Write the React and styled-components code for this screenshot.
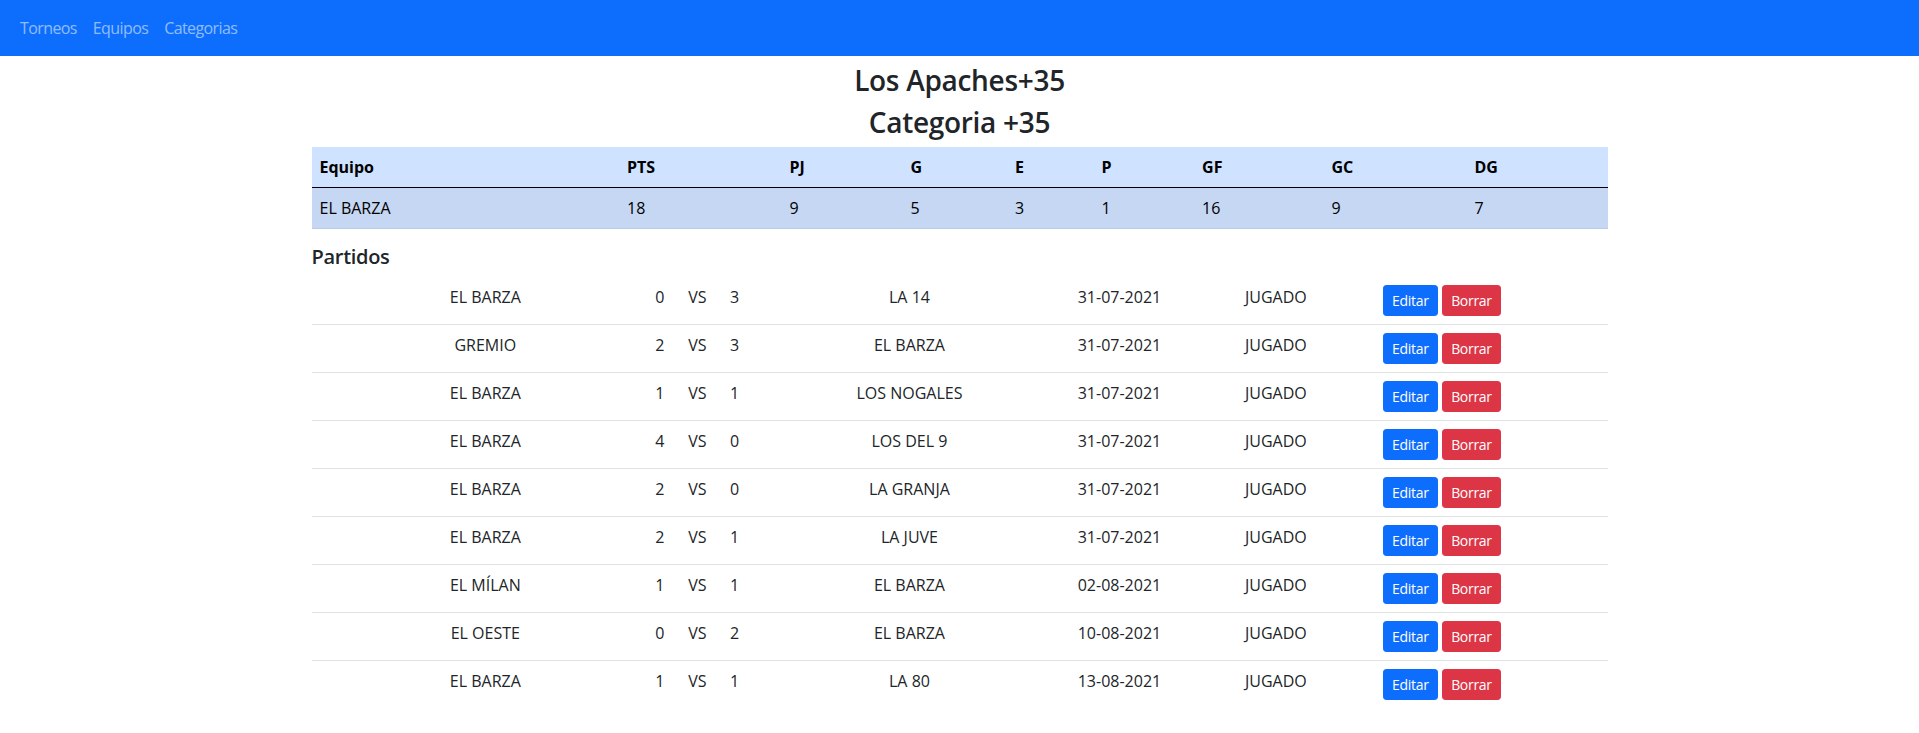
import React from "react";
import styled, { createGlobalStyle } from "styled-components";

const GlobalStyle = createGlobalStyle`
  *, *::before, *::after { box-sizing: border-box; }
  body {
    margin: 0;
    font-family: "Open Sans", "Noto Sans", sans-serif;
    font-size: 16px;
    line-height: 1.5;
    color: #212529;
    background: #fff;
  }
`;

const Navbar = styled.nav`
  height: 56px;
  background: #0d6efd;
  padding: 8px 12px;
  display: flex;
  align-items: center;
`;

const NavLink = styled.a`
  padding: 8px;
  color: rgba(255, 255, 255, 0.55);
  text-decoration: none;
  font-size: 16px;
  line-height: 24px;
  letter-spacing: -0.6px;
`;

const Container = styled.main`
  width: 1296px;
  margin: 8px auto 0;
`;

const Title = styled.h3`
  margin: 0 0 8px;
  font-size: 28px;
  line-height: 1.2;
  font-weight: 600;
  letter-spacing: -0.3px;
  text-align: center;
  color: #212529;
`;

const Standings = styled.table`
  width: 100%;
  border-collapse: collapse;
  table-layout: fixed;
  margin-bottom: 16px;
  color: #000;
`;

const HeadCell = styled.th`
  background: #cfe2ff;
  padding: 8px;
  line-height: 24px;
  text-align: left;
  font-weight: 700;
  border-bottom: 1px solid #000;
`;

const BodyCell = styled.td`
  background: #c5d7f2;
  padding: 8px;
  line-height: 24px;
  border-bottom: 1px solid #bacbe6;
`;

const SectionTitle = styled.h5`
  margin: 0 0 8px;
  font-size: 20px;
  line-height: 1.2;
  font-weight: 600;
  letter-spacing: -0.3px;
  color: #212529;
`;

const MatchRow = styled.div`
  display: flex;
  align-items: flex-start;
  padding: 8px 0 8px 13.8px;
  border-bottom: 1px solid ${(p) => (p.$last ? "transparent" : "#dee2e6")};
`;

const MatchCell = styled.div`
  flex: 0 0 ${(p) => p.$w}px;
  text-align: center;
  line-height: 24px;
  white-space: nowrap;
`;

const Actions = styled.div`
  flex: 1;
  display: flex;
  gap: 4.5px;
`;

const Button = styled.button`
  font-family: inherit;
  font-size: 14px;
  line-height: 21px;
  letter-spacing: -0.3px;
  padding: 4px 8px;
  border-radius: 3.2px;
  color: #fff;
  border: 1px solid ${(p) => (p.$danger ? "#dc3545" : "#0d6efd")};
  background: ${(p) => (p.$danger ? "#dc3545" : "#0d6efd")};
  cursor: pointer;
`;

const colWidths = [307.5, 162.5, 121, 104.5, 86.5, 100.6, 129.4, 143, 141];
const headers = ["Equipo", "PTS", "PJ", "G", "E", "P", "GF", "GC", "DG"];
const standing = ["EL BARZA", "18", "9", "5", "3", "1", "16", "9", "7"];

const matchCols = [320, 29.2, 45.8, 28.4, 321.6, 98.4, 214.4];

const matches = [
  ["EL BARZA", "0", "3", "LA 14", "31-07-2021"],
  ["GREMIO", "2", "3", "EL BARZA", "31-07-2021"],
  ["EL BARZA", "1", "1", "LOS NOGALES", "31-07-2021"],
  ["EL BARZA", "4", "0", "LOS DEL 9", "31-07-2021"],
  ["EL BARZA", "2", "0", "LA GRANJA", "31-07-2021"],
  ["EL BARZA", "2", "1", "LA JUVE", "31-07-2021"],
  ["EL MÍLAN", "1", "1", "EL BARZA", "02-08-2021"],
  ["EL OESTE", "0", "2", "EL BARZA", "10-08-2021"],
  ["EL BARZA", "1", "1", "LA 80", "13-08-2021"],
];

export default function App() {
  return (
    <>
      <GlobalStyle />
      <Navbar>
        <NavLink href="#">Torneos</NavLink>
        <NavLink href="#">Equipos</NavLink>
        <NavLink href="#">Categorias</NavLink>
      </Navbar>
      <Container>
        <Title>Los Apaches+35</Title>
        <Title>Categoria +35</Title>
        <Standings>
          <colgroup>
            {colWidths.map((w, i) => (
              <col key={i} style={{ width: w }} />
            ))}
          </colgroup>
          <thead>
            <tr>
              {headers.map((h) => (
                <HeadCell key={h}>{h}</HeadCell>
              ))}
            </tr>
          </thead>
          <tbody>
            <tr>
              {standing.map((v, i) => (
                <BodyCell key={i}>{v}</BodyCell>
              ))}
            </tr>
          </tbody>
        </Standings>
        <SectionTitle>Partidos</SectionTitle>
        {matches.map((m, i) => (
          <MatchRow key={i} $last={i === matches.length - 1}>
            <MatchCell $w={matchCols[0]}>{m[0]}</MatchCell>
            <MatchCell $w={matchCols[1]}>{m[1]}</MatchCell>
            <MatchCell $w={matchCols[2]}>VS</MatchCell>
            <MatchCell $w={matchCols[3]}>{m[2]}</MatchCell>
            <MatchCell $w={matchCols[4]}>{m[3]}</MatchCell>
            <MatchCell $w={matchCols[5]}>{m[4]}</MatchCell>
            <MatchCell $w={matchCols[6]}>JUGADO</MatchCell>
            <Actions>
              <Button>Editar</Button>
              <Button $danger>Borrar</Button>
            </Actions>
          </MatchRow>
        ))}
      </Container>
    </>
  );
}
